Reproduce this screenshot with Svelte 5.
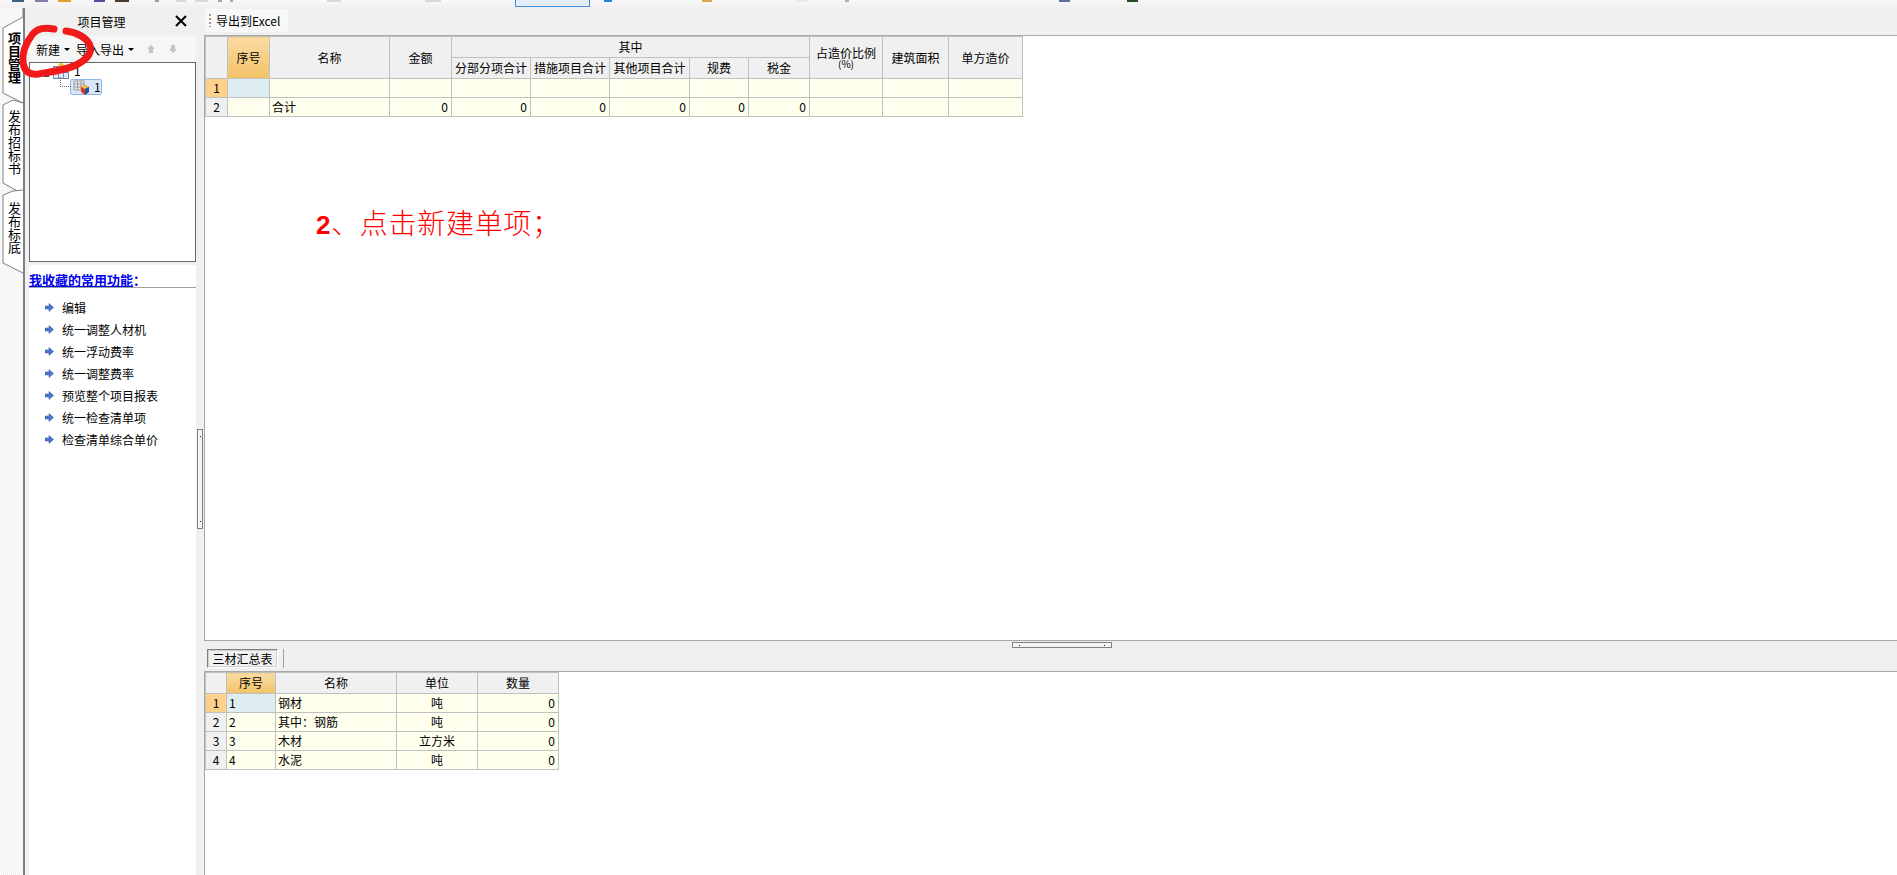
<script>
  const topBits = [
    { x: 12, w: 12, c: "#3f5f80" }, { x: 35, w: 13, c: "#8080b0" }, { x: 58, w: 13, c: "#e0a030" },
    { x: 94, w: 11, c: "#5050a0" }, { x: 115, w: 14, c: "#4a3a30" }, { x: 155, w: 4, c: "#a0a0a0" },
    { x: 176, w: 10, c: "#d8d8d8" }, { x: 195, w: 13, c: "#d8d8d8" }, { x: 218, w: 4, c: "#a8a8a8" },
    { x: 230, w: 3, c: "#a8a8a8" }, { x: 327, w: 14, c: "#d8d8d8" }, { x: 425, w: 16, c: "#d8d8d8" },
    { x: 604, w: 8, c: "#2080f0" }, { x: 702, w: 10, c: "#d8a850" }, { x: 795, w: 12, c: "#e8e8e8" },
    { x: 845, w: 4, c: "#b0b0b0" }, { x: 1059, w: 11, c: "#5a70a0" }, { x: 1127, w: 11, c: "#2a4a2a" }
  ];

  const favourites = ["编辑", "统一调整人材机", "统一浮动费率", "统一调整费率", "预览整个项目报表", "统一检查清单项", "检查清单综合单价"];

  const projectCols = [22, 42, 120, 62, 79, 79, 80, 59, 61, 73, 66, 74];
  const materialCols = [21, 49, 121, 81, 81];
  const materials = [
    { no: "1", name: "钢材", unit: "吨", qty: "0" },
    { no: "2", name: "其中：钢筋", unit: "吨", qty: "0" },
    { no: "3", name: "木材", unit: "立方米", qty: "0" },
    { no: "4", name: "水泥", unit: "吨", qty: "0" }
  ];
</script>

<div class="app">
  <div class="topstrip">
    {#each topBits as b}
      <i class="bit" style="left:{b.x}px;width:{b.w}px;background:{b.c}"></i>
    {/each}
    <i class="selbox"></i>
  </div>

  <div class="body">
    <div class="tabs">
      <svg class="tabshapes" width="24" height="280" viewBox="0 0 24 280">
        <path d="M23 0 L23 9 L3 20 L3 85 L23 95" fill="#fff" stroke="#808080" />
        <path d="M23 95 L13 92 L3 97 L3 175 L23 186" fill="#fff" stroke="#808080" />
        <path d="M23 182 L13 183 L3 187 L3 255 L23 265" fill="#fff" stroke="#808080" />
      </svg>
      <div class="tab on">项目管理</div>
      <div class="tab t2">发布招标书</div>
      <div class="tab t3">发布标底</div>
    </div>

    <div class="panel">
      <div class="panelhead">
        <span>项目管理</span>
        <svg class="close" width="12" height="12" viewBox="0 0 12 12"><path d="M1 1 L11 11 M11 1 L1 11" stroke="#000" stroke-width="2" /></svg>
      </div>
      <div class="paneltools">
        <span class="tbtn">新建<b class="caret"></b></span>
        <span class="tbtn io">导入导出<b class="caret"></b></span>
        <svg class="arrow" width="10" height="10" viewBox="0 0 10 10"><path d="M5 1 L9 5 H7 V9 H3 V5 H1 Z" fill="#c4c4c4" /></svg>
        <svg class="arrow dn" width="10" height="10" viewBox="0 0 10 10"><path d="M5 9 L9 5 H7 V1 H3 V5 H1 Z" fill="#c4c4c4" /></svg>
      </div>
      <div class="tree">
        <div class="node root">
          <svg width="16" height="16" viewBox="0 0 16 16">
            <rect x="0.5" y="3.5" width="15" height="12" fill="#dfe8f4" stroke="#7088a8" />
            <path d="M5.5 4 V15 M10.5 4 V15 M1 9.5 H15" stroke="#7088a8" />
            <circle cx="8" cy="3" r="3" fill="#f0c040" />
          </svg>
          <span>1</span>
        </div>
        <div class="node child">
          <svg width="17" height="15" viewBox="0 0 17 15">
            <path d="M1 1 H11 V10 H1 Z M4.5 1 V10 M8 1 V10 M1 4 H11 M1 7 H11" fill="#eee" stroke="#999" />
            <path d="M12 5 L16 7 V12 L12 15 L8 12 V7 Z" fill="#d04020" />
            <path d="M12 5 L16 7 L12 9 L8 7 Z" fill="#f0c040" />
            <path d="M12 9 L16 7 V12 L12 15 Z" fill="#2050b0" />
          </svg>
          <span>1</span>
        </div>
      </div>
      <div class="fav">
        <div class="favhead"><span>我收藏的常用功能</span>：</div>
        <ul>
          {#each favourites as item}
            <li>
              <svg width="9" height="9" viewBox="0 0 9 9"><path d="M0 3 H4 V0.5 L8.5 4.5 L4 8.5 V6 H0 Z" fill="#4a78d0" stroke="#2a4a90" stroke-width="0.5" /></svg>
              {item}
            </li>
          {/each}
        </ul>
      </div>
    </div>

    <div class="vsplit"><div class="vgrip"><i></i><i></i></div></div>

    <div class="main">
      <div class="exportbar">
        <div class="exportbtn"><i class="grip"></i>导出到Excel</div>
      </div>

      <div class="grid upper">
        <table style="width:{projectCols.reduce((a, b) => a + b, 0)}px">
          <colgroup>{#each projectCols as w}<col style="width:{w}px" />{/each}</colgroup>
          <thead>
            <tr>
              <th rowspan="2"></th>
              <th rowspan="2" class="hot">序号</th>
              <th rowspan="2">名称</th>
              <th rowspan="2">金额</th>
              <th colspan="5">其中</th>
              <th rowspan="2"><div class="two">占造价比例<small>(%)</small></div></th>
              <th rowspan="2">建筑面积</th>
              <th rowspan="2">单方造价</th>
            </tr>
            <tr>
              <th>分部分项合计</th><th>措施项目合计</th><th>其他项目合计</th><th>规费</th><th>税金</th>
            </tr>
          </thead>
          <tbody>
            <tr>
              <th class="rowno hot2">1</th><td class="cur"></td><td></td><td></td><td></td><td></td><td></td><td></td><td></td><td></td><td></td><td></td>
            </tr>
            <tr>
              <th class="rowno">2</th><td></td><td>合计</td>
              <td class="num">0</td><td class="num">0</td><td class="num">0</td><td class="num">0</td><td class="num">0</td><td class="num">0</td>
              <td></td><td></td><td></td>
            </tr>
          </tbody>
        </table>
        <div class="note"><b>2</b>、点击新建单项；</div>
      </div>

      <div class="hsplit">
        <div class="hgrip"><i></i><i></i></div>
        <div class="sheettabs"><span class="sheet">三材汇总表</span><i class="sheetsep"></i></div>
      </div>

      <div class="grid lower">
        <table style="width:{materialCols.reduce((a, b) => a + b, 0)}px">
          <colgroup>{#each materialCols as w}<col style="width:{w}px" />{/each}</colgroup>
          <thead>
            <tr><th></th><th class="hot">序号</th><th>名称</th><th>单位</th><th>数量</th></tr>
          </thead>
          <tbody>
            {#each materials as m, i}
              <tr>
                <th class="rowno" class:hot2={i === 0}>{i + 1}</th>
                <td class:cur={i === 0}>{m.no}</td>
                <td>{m.name}</td>
                <td class="mid">{m.unit}</td>
                <td class="num">{m.qty}</td>
              </tr>
            {/each}
          </tbody>
        </table>
      </div>
    </div>
  </div>

  <svg class="scribble" width="110" height="90" viewBox="0 0 110 90">
    <path d="M54 29 C44 27 36 29 32 35 C26 43 22 53 23 62 C24 72 30 75 38 74 C50 72 66 70 76 65 C86 60 92 54 90 46 C88 38 76 32 66 31" fill="none" stroke="#f01a1a" stroke-width="7" stroke-linecap="round" />
  </svg>
</div>

<style>
  :global(body) {
    margin: 0;
    background: #f0f0f0;
  }
  .app {
    position: relative;
    width: 1897px;
    height: 875px;
    overflow: hidden;
    display: flex;
    flex-direction: column;
    background: #f0f0f0;
    font-family: "Noto Sans CJK SC", "Liberation Sans", sans-serif;
    font-size: 12px;
    color: #000;
  }
  .topstrip {
    position: relative;
    height: 8px;
    flex: none;
    background: linear-gradient(#f8f8f8, #f0f0f0);
  }
  .bit {
    position: absolute;
    top: 0;
    height: 2px;
  }
  .selbox {
    position: absolute;
    left: 515px;
    top: -2px;
    width: 73px;
    height: 7px;
    background: #e3eefa;
    border: 1px solid #3d8fe0;
  }
  .body {
    flex: 1;
    display: flex;
    min-height: 0;
  }
  .tabs {
    position: relative;
    width: 23px;
    flex: none;
    border-right: 2px solid #808080;
    background-color: #fafafa;
    background-image: conic-gradient(#f0f0f0 25%, #fff 0 50%, #f0f0f0 0 75%, #fff 0);
    background-size: 2px 2px;
    font-size: 13px;
    line-height: 13px;
  }
  .tabshapes {
    position: absolute;
    left: 0;
    top: 0;
  }
  .tab {
    position: relative;
    writing-mode: vertical-rl;
    text-orientation: upright;
    width: 14px;
    margin-left: 7px;
  }
  .tab.on {
    margin-top: 24px;
    font-weight: 700;
  }
  .t2 {
    margin-top: 26px;
  }
  .t3 {
    margin-top: 27px;
  }
  .panel {
    width: 171px;
    flex: none;
    display: flex;
    flex-direction: column;
    padding-left: 4px;
    box-sizing: border-box;
  }
  .panelhead {
    height: 28px;
    display: flex;
    align-items: center;
    justify-content: center;
    position: relative;
    padding: 0 22px 2px 0;
    box-sizing: border-box;
    flex: none;
  }
  .close {
    position: absolute;
    right: 9px;
    top: 7px;
  }
  .paneltools {
    height: 26px;
    display: flex;
    align-items: center;
    padding-left: 7px;
    background: #f6f6f6;
    flex: none;
  }
  .tbtn {
    display: inline-flex;
    align-items: center;
    gap: 4px;
  }
  .tbtn.io {
    margin-left: 6px;
  }
  .caret {
    width: 0;
    height: 0;
    border: 3px solid transparent;
    border-top-color: #000;
    border-bottom: 0;
  }
  .arrow {
    margin-left: 12px;
  }
  .tree {
    height: 200px;
    flex: none;
    box-sizing: border-box;
    background: #fff;
    border: 1px solid #666;
    position: relative;
    width: 167px;
  }
  .node {
    display: flex;
    align-items: center;
    gap: 5px;
    line-height: 14px;
  }
  .root {
    margin-left: 23px;
    height: 16px;
  }
  .root::before {
    content: "";
    position: absolute;
    left: 13px;
    top: 8px;
    border: 3px solid transparent;
    border-right-color: #444;
    border-bottom-color: #444;
  }
  .child {
    margin-left: 40px;
    width: 32px;
    height: 16px;
    box-sizing: border-box;
    background: #d8e8fa;
    border: 1px solid #90b8e4;
    border-radius: 2px;
    padding-left: 2px;
    gap: 4px;
    position: relative;
  }
  .child::before {
    content: "";
    position: absolute;
    left: -11px;
    top: -3px;
    width: 10px;
    height: 9px;
    border-left: 1px dotted #666;
    border-bottom: 1px dotted #666;
  }
  .fav {
    flex: 1;
    background: #fff;
    margin-top: 3px;
    width: 167px;
    padding-top: 8px;
  }
  .favhead {
    height: 13px;
    line-height: 13px;
    font-size: 13px;
    color: #0000f0;
    font-weight: 700;
    border-bottom: 1px solid #a0a0a0;
    padding-bottom: 1px;
    white-space: nowrap;
  }
  .favhead span {
    text-decoration: underline;
  }
  ul {
    list-style: none;
    margin: 8px 0 0;
    padding: 0 0 0 16px;
  }
  li {
    height: 22px;
    display: flex;
    align-items: center;
    gap: 8px;
    white-space: nowrap;
  }
  .vsplit {
    width: 8px;
    flex: none;
    position: relative;
  }
  .vgrip {
    position: absolute;
    left: 1px;
    top: 421px;
    width: 4px;
    height: 98px;
    border: 1px solid #808080;
    background: #f4f4f4;
  }
  .vgrip i, .hgrip i {
    position: absolute;
    width: 1px;
    height: 1px;
    background: #0000c0;
  }
  .vgrip i:first-child { left: 2px; top: 6px; }
  .vgrip i:last-child { left: 2px; bottom: 6px; }
  .main {
    flex: 1;
    min-width: 0;
    display: flex;
    flex-direction: column;
  }
  .exportbar {
    height: 27px;
    flex: none;
    padding-left: 1px;
    padding-top: 1px;
    box-sizing: border-box;
  }
  .exportbtn {
    width: 83px;
    height: 23px;
    background: #f8f8f8;
    display: flex;
    align-items: center;
    gap: 5px;
    padding-left: 4px;
    box-sizing: border-box;
    border-radius: 2px;
    white-space: nowrap;
  }
  .grip {
    width: 2px;
    height: 13px;
    background: repeating-linear-gradient(#999 0 2px, transparent 2px 4px);
  }
  .grid {
    background: #fff;
    border-left: 1px solid #a8a8a8;
    position: relative;
  }
  .upper {
    height: 606px;
    flex: none;
    border-top: 1px solid #a8a8a8;
    border-bottom: 1px solid #a8a8a8;
    box-sizing: border-box;
  }
  .lower {
    flex: 1;
    border-top: 1px solid #a8a8a8;
  }
  table {
    table-layout: fixed;
    border-collapse: collapse;
  }
  th, td {
    border: 1px solid #c0c0c0;
    padding: 0;
    font-weight: 400;
    height: 18px;
    line-height: 14px;
    overflow: hidden;
    white-space: nowrap;
  }
  th {
    background: #f0f0f0;
    text-align: center;
  }
  thead th {
    height: 20px;
  }
  td {
    background: #ffffee;
    padding-left: 2px;
  }
  .hot {
    background: linear-gradient(#fbdca4, #f2c266);
  }
  .hot2 {
    background: #fdd08c;
  }
  .cur {
    background: #deedf2;
  }
  .num {
    text-align: right;
    padding: 0 3px 0 0;
  }
  .mid {
    text-align: center;
    padding: 0;
  }
  .two {
    line-height: 13px;
    display: flex;
    flex-direction: column;
    align-items: center;
  }
  .two small {
    font-size: 10px;
    line-height: 10px;
  }
  .note {
    position: absolute;
    left: 111px;
    top: 167px;
    font-size: 28px;
    font-weight: 300;
    line-height: 38px;
    letter-spacing: 0.7px;
    color: #ff0000;
    white-space: nowrap;
  }
  .note b {
    font-family: "Liberation Sans", sans-serif;
    font-size: 26px;
    font-weight: 700;
  }
  .hsplit {
    height: 30px;
    flex: none;
    position: relative;
    display: flex;
    align-items: flex-start;
  }
  .hgrip {
    position: absolute;
    left: 808px;
    top: 1px;
    width: 98px;
    height: 4px;
    border: 1px solid #808080;
    background: #f4f4f4;
  }
  .hgrip i:first-child { left: 6px; top: 2px; }
  .hgrip i:last-child { right: 6px; top: 2px; }
  .sheettabs {
    margin: 8px 0 0 3px;
    display: flex;
    align-items: stretch;
    gap: 5px;
    height: 19px;
  }
  .sheet {
    width: 71px;
    box-sizing: border-box;
    border: 1px solid;
    border-color: #808080 #fff #fff #808080;
    outline: 1px solid #d0d0d0;
    outline-offset: -2px;
    text-align: center;
    line-height: 17px;
  }
  .sheetsep {
    width: 1px;
    background: #a0a0a0;
  }
  .scribble {
    position: absolute;
    left: 0;
    top: 0;
    pointer-events: none;
  }
</style>
